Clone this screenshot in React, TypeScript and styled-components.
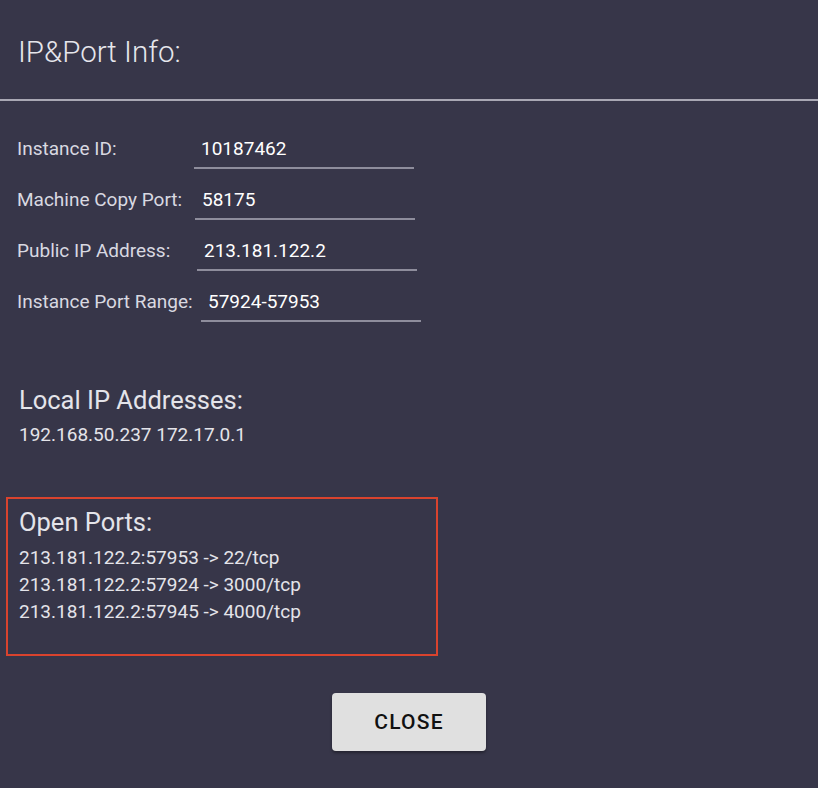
import React from 'react';
import styled, { createGlobalStyle } from 'styled-components';

const GlobalStyle = createGlobalStyle`
    html, body {
        margin: 0;
        padding: 0;
        background: #373649;
    }
    body {
        font-family: Roboto, 'Liberation Sans', sans-serif;
        color: #e4e4ea;
    }
`;

const Dialog = styled.div`
    width: 818px;
    height: 788px;
    background: #373649;
    display: flex;
    flex-direction: column;
    box-sizing: border-box;
`;

const Header = styled.div`
    height: 101px;
    display: flex;
    align-items: center;
    padding: 5px 0 0 18px;
    border-bottom: 2px solid #a9a8b4;
    box-sizing: border-box;
`;

const Title = styled.h2`
    margin: 0;
    font-size: 29.5px;
    font-weight: 300;
    color: #e6e6ec;
`;

const Fields = styled.div`
    display: flex;
    flex-direction: column;
    gap: 15px;
    padding: 32px 0 0 17px;
`;

const FieldRow = styled.div`
    display: flex;
    align-items: flex-start;
`;

const Label = styled.span<{ $width: number }>`
    width: ${(p) => p.$width}px;
    flex-shrink: 0;
    font-size: 19px;
    line-height: 32px;
    color: #d9d9e1;
`;

const Input = styled.div`
    width: 220px;
    height: 36px;
    box-sizing: border-box;
    padding-left: 7px;
    font-size: 19px;
    line-height: 32px;
    color: #ffffff;
    border-bottom: 2px solid #8e8d9c;
`;

const SectionTitle = styled.div`
    font-size: 25.5px;
    color: #e4e4ea;
    line-height: 30px;
    margin-bottom: 6px;
`;

const SectionLine = styled.div`
    font-size: 19px;
    line-height: 27px;
    color: #e4e4ea;
`;

const LocalSection = styled.div`
    padding: 0 19px;
    margin-top: 63px;
`;

const PortsBox = styled.div`
    margin: 49px 0 0 6px;
    width: 432px;
    height: 159px;
    box-sizing: border-box;
    border: 2px solid #d9432e;
    padding: 8px 0 0 11px;
`;

const PortsTitle = styled(SectionTitle)`
    margin-bottom: 7px;
`;

const Footer = styled.div`
    display: flex;
    justify-content: center;
    margin-top: 37px;
`;

const CloseButton = styled.button`
    width: 154px;
    height: 58px;
    border: none;
    border-radius: 4px;
    background: #e0e0e0;
    color: #111111;
    font-family: Roboto, 'Liberation Sans', sans-serif;
    font-size: 21px;
    font-weight: 500;
    letter-spacing: 1.2px;
    padding: 0;
    box-shadow: 0 2px 3px rgba(0, 0, 0, 0.35);
    cursor: pointer;
`;

const fields = [
    { label: 'Instance ID:', value: '10187462', width: 177 },
    { label: 'Machine Copy Port:', value: '58175', width: 178 },
    { label: 'Public IP Address:', value: '213.181.122.2', width: 180 },
    { label: 'Instance Port Range:', value: '57924-57953', width: 184 },
];

const openPorts = [
    '213.181.122.2:57953 -> 22/tcp',
    '213.181.122.2:57924 -> 3000/tcp',
    '213.181.122.2:57945 -> 4000/tcp',
];

const App = () => {
    return (
        <>
            <GlobalStyle />
            <Dialog>
                <Header>
                    <Title>IP&amp;Port Info:</Title>
                </Header>
                <Fields>
                    {fields.map((f) => (
                        <FieldRow key={f.label}>
                            <Label $width={f.width}>{f.label}</Label>
                            <Input>{f.value}</Input>
                        </FieldRow>
                    ))}
                </Fields>
                <LocalSection>
                    <SectionTitle>Local IP Addresses:</SectionTitle>
                    <SectionLine>192.168.50.237 172.17.0.1</SectionLine>
                </LocalSection>
                <PortsBox>
                    <PortsTitle>Open Ports:</PortsTitle>
                    {openPorts.map((p) => (
                        <SectionLine key={p}>{p}</SectionLine>
                    ))}
                </PortsBox>
                <Footer>
                    <CloseButton>CLOSE</CloseButton>
                </Footer>
            </Dialog>
        </>
    );
};

export default App;
